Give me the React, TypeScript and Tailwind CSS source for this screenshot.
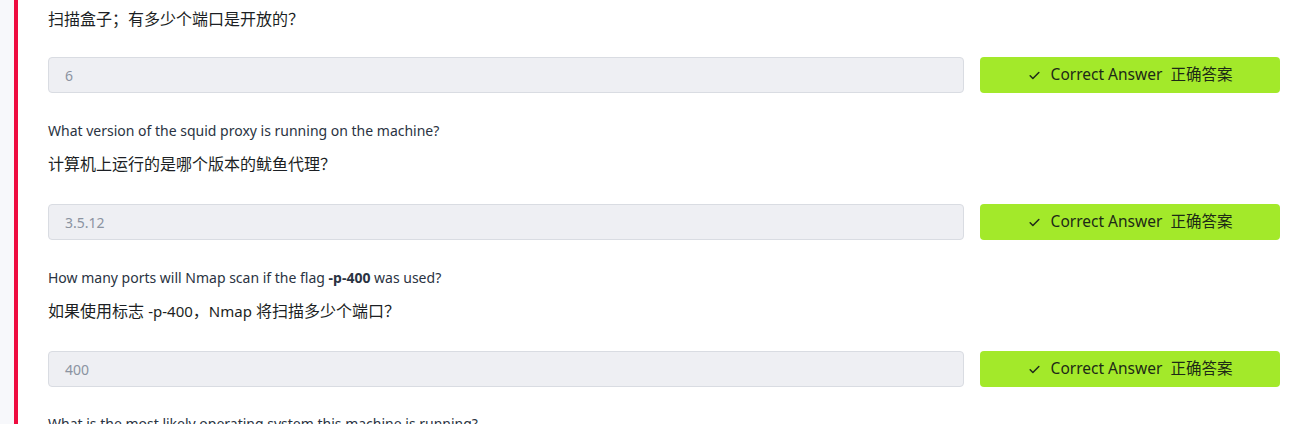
import React from "react";

function Check() {
  return (
    <svg width="13" height="13" viewBox="0 0 24 24" fill="none" stroke="#1f2a1a" strokeWidth="2.8" strokeLinecap="round" strokeLinejoin="round">
      <path d="M4 12.5l5 5L20 6.5" />
    </svg>
  );
}

function AnswerRow({ value }: { value: string }) {
  return (
    <div className="flex gap-4">
      <div className="flex-1 h-[36px] rounded-[4px] border border-[#d9dce2] bg-[#eeeff3] flex items-center pl-[16px] text-[14px] text-[#8b93a1]">
        {value}
      </div>
      <button className="w-[300px] h-[36px] rounded-[4px] bg-[#a3e92a] flex items-center justify-center gap-[10px] text-[15.5px] text-[#1d2a16]">
        <Check />
        <span>Correct Answer&nbsp;&nbsp;正确答案</span>
      </button>
    </div>
  );
}

export default function App() {
  return (
    <div
      className="flex h-[424px] w-[1305px] overflow-hidden bg-white"
      style={{ fontFamily: '"Noto Sans", "Noto Sans CJK SC", sans-serif' }}
    >
      <div className="w-[14px] bg-[#f7f8fb] shrink-0" />
      <div className="w-[4px] bg-[#ee0b3f] shrink-0" />
      <div className="flex-1 pl-[30px] pr-[25px] pt-[7px]">
        <p className="text-[16px] leading-[24px] text-[#1c1f24]">扫描盒子；有多少个端口是开放的？</p>
        <div className="mt-[26px]">
          <AnswerRow value="6" />
        </div>

        <p className="mt-[28px] text-[14px] leading-[20px] text-[#2a3342]">What version of the squid proxy is running on the machine?</p>
        <p className="mt-[11px] text-[16px] leading-[24px] text-[#1c1f24]">计算机上运行的是哪个版本的鱿鱼代理？</p>
        <div className="mt-[28px]">
          <AnswerRow value="3.5.12" />
        </div>

        <p className="mt-[28px] text-[14px] leading-[20px] text-[#2a3342]">
          How many ports will Nmap scan if the flag <b className="font-bold">-p-400</b> was used?
        </p>
        <p className="mt-[11px] text-[16px] leading-[24px] text-[#1c1f24]">
          如果使用标志 <span className="text-[15px]">-p-400</span>，<span className="text-[15px]">Nmap</span> 将扫描多少个端口？
        </p>
        <div className="mt-[28px]">
          <AnswerRow value="400" />
        </div>

        <p className="mt-[27px] text-[14px] leading-[20px] text-[#2a3342]">What is the most likely operating system this machine is running?</p>
      </div>
    </div>
  );
}
